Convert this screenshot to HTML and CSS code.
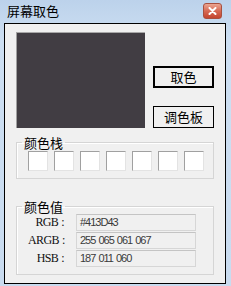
FILE: index.html
```html
<!DOCTYPE html>
<html lang="zh">
<head>
    <meta charset="UTF-8">
    <title>屏幕取色</title>
    <link rel="stylesheet" href="styles.css">
</head>
<body>
    <div class="window">
        <!-- 标题栏 -->
        <div class="titlebar">
            <span class="title">屏幕取色</span>
            <div class="close">
                <svg width="9" height="8" viewBox="0 0 9 8">
                    <path d="M1.5 1 L7.5 7 M7.5 1 L1.5 7" stroke="#fff" stroke-width="2" stroke-linecap="round"/>
                </svg>
            </div>
        </div>

        <div class="client">
            <!-- 预览 + 按钮 -->
            <div class="top-row">
                <div class="swatch"></div>
                <div class="actions">
                    <button class="btn default">取色</button>
                    <button class="btn">调色板</button>
                </div>
            </div>

            <!-- 颜色栈 -->
            <fieldset class="group">
                <legend>颜色栈</legend>
                <div class="stack">
                    <div class="cell"></div>
                    <div class="cell"></div>
                    <div class="cell"></div>
                    <div class="cell"></div>
                    <div class="cell"></div>
                    <div class="cell"></div>
                    <div class="cell"></div>
                </div>
            </fieldset>

            <!-- 颜色值 -->
            <fieldset class="group values">
                <legend>颜色值</legend>
                <div class="rows">
                    <span class="label">RGB<span class="colon">:</span></span>
                    <div class="field">#413D43</div>
                    <span class="label">ARGB<span class="colon">:</span></span>
                    <div class="field">255 065 061 067</div>
                    <span class="label">HSB<span class="colon">:</span></span>
                    <div class="field">187 011 060</div>
                </div>
            </fieldset>
        </div>
    </div>
</body>
</html>
```

FILE: styles.css
```css
body {
    margin: 0;
    font-family: "Noto Sans CJK SC", sans-serif;
    background: #c6d9ee;
}

.window {
    width: 231px;
    height: 286px;
    background: linear-gradient(#bcd2eb, #cddff2 40px, #c9dbef);
    overflow: hidden;
}

.titlebar {
    height: 23px;
    display: flex;
    align-items: flex-start;
    justify-content: space-between;
    padding: 0 9px 0 7px;
    box-sizing: border-box;
}
.title {
    font-size: 13px;
    line-height: 20px;
    margin-top: 1px;
    color: #000;
}
.close {
    width: 17px;
    height: 14px;
    margin-top: 3px;
    border: 1px solid #a8503f;
    border-radius: 3px;
    background: linear-gradient(#eba692, #d66a55 50%, #c4452f);
    display: flex;
    align-items: center;
    justify-content: center;
}

.client {
    margin: 0 5px 0 4px;
    height: 261px;
    box-sizing: border-box;
    border: 1px solid #000;
    background: #f0f0f0;
    padding: 8px 11px 0 11px;
}

.top-row {
    display: flex;
    gap: 8px;
}
.swatch {
    width: 129px;
    height: 96px;
    box-sizing: border-box;
    background: #413d43;
    border-top: 1px solid #a8a8a8;
    border-left: 1px solid #a0a0a0;
}
.actions {
    display: flex;
    flex-direction: column;
    justify-content: flex-end;
    gap: 18px;
}
.btn {
    width: 61px;
    height: 22px;
    padding: 0;
    box-sizing: border-box;
    border: 1px solid #000;
    background: #f0f0f0;
    font-family: "Noto Sans CJK SC", sans-serif;
    font-size: 13px;
    line-height: 18px;
    color: #000;
}
.btn.default { border-width: 2px; }

.group {
    margin: 7px 0 0 0;
    padding: 1px 0 7px 11px;
    border: 1px solid #d5d5d5;
    box-shadow: inset 1px 1px #fff;
}
.group legend {
    margin-left: -6px;
    padding: 0 2px;
    font-size: 13px;
    line-height: 15px;
    color: #000;
}
.values {
    margin-top: 20px;
    padding-top: 0;
}

.stack {
    display: flex;
    gap: 6px;
}
.cell {
    width: 20px;
    height: 20px;
    box-sizing: border-box;
    background: #fff;
    border: 1px solid;
    border-color: #a0a0a0 #e3e3e3 #e3e3e3 #a0a0a0;
}

.rows {
    display: grid;
    grid-template-columns: 36px 120px;
    column-gap: 12px;
    row-gap: 1px;
    align-items: center;
}
.label {
    text-align: right;
    font-family: "Liberation Serif", serif;
    font-size: 12px;
    letter-spacing: -0.6px;
    color: #111;
}
.colon { margin-left: 3px; }
.field {
    height: 17px;
    box-sizing: border-box;
    border: 1px solid #d6d6d6;
    border-top-color: #c4c4c4;
    padding-left: 3px;
    font-family: "Liberation Sans", sans-serif;
    font-size: 11px;
    line-height: 15px;
    letter-spacing: -1px;
    word-spacing: 1px;
    color: #3a3a3a;
}
```
